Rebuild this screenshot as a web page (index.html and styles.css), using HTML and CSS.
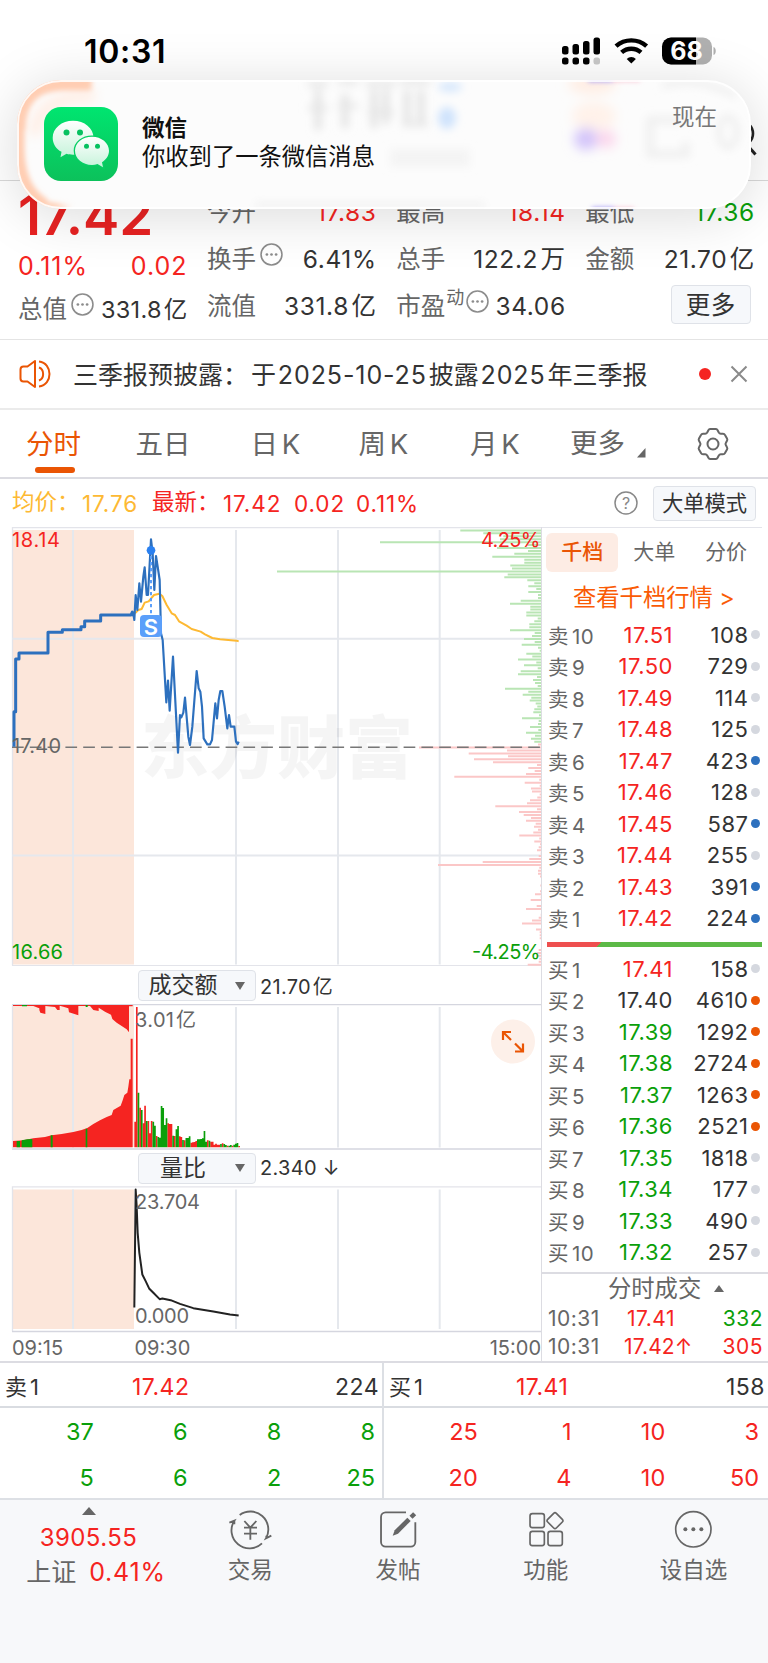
FILE: index.html
```html
<!DOCTYPE html>
<html lang="zh-CN">
<head>
<meta charset="utf-8">
<title>分时行情</title>
<link rel="stylesheet" href="styles.css">
</head>
<body>
<div class="page">
  <header class="status">
    <span class="clock">10:31</span>
    <svg class="status-icons" width="160" height="32" viewBox="0 0 160 32">
      <g fill="#000">
        <rect x="2" y="10" width="6.500" height="8.500" rx="2.500"/><rect x="12.500" y="8" width="6.500" height="10.500" rx="2.500"/><rect x="23" y="5" width="6.500" height="13.500" rx="2.500"/><rect x="33.500" y="1.500" width="6.500" height="17" rx="2.500"/>
        <rect x="2" y="21.500" width="6.500" height="7" rx="2.500"/><rect x="12.500" y="21.500" width="6.500" height="7" rx="2.500"/><rect x="23" y="21.500" width="6.500" height="7" rx="2.500"/>
      </g>
      <rect x="33.500" y="21.500" width="6.500" height="7" rx="2.500" fill="#c8c8c8"/>
      <g fill="none" stroke="#000" stroke-width="4.400">
        <path d="M56 10.200a23 23 0 0 1 30.600 0"/><path d="M61.600 16.400a14.500 14.500 0 0 1 19.400 0"/>
      </g>
      <path d="M71.300 27.500l-4.600-4.600a6.600 6.600 0 0 1 9.200 0z" fill="#000"/>
      <rect x="102" y="1.500" width="50" height="27" rx="9" fill="#b0b0b0"/>
      <path d="M111 1.500h25v27h-25a9 9 0 0 1-9-9v-9a9 9 0 0 1 9-9z" fill="#000"/>
      <path d="M153.500 11c3 1 3 7 0 8z" fill="#b0b0b0"/>
      <text x="126.500" y="23.800" class="battery-text">68</text>
    </svg>
  </header>
  <svg class="search-glyph" width="30" height="50" viewBox="0 0 30 50"><circle cx="6" cy="18.500" r="12" fill="none" stroke="#222" stroke-width="2.600"/><path d="M13 31l7.500 8.500" stroke="#222" stroke-width="3"/></svg>

  <section class="quote">
    <div class="col first">
      <div class="big">17.42</div>
      <div class="pair red change"><span>0.11%</span><span>0.02</span></div>
      <div class="pair cap"><span class="lab">总值</span><svg class="more-dot" viewBox="0 0 22 22"><use href="#dots"/></svg><span class="push tight">331.8 亿</span></div>
    </div>
    <div class="col">
      <div class="pair"><span class="lab">今开</span><span class="red">17.83</span></div>
      <div class="pair"><span class="lab">换手</span><svg class="more-dot" viewBox="0 0 22 22"><use href="#dots"/></svg><span class="push">6.41%</span></div>
      <div class="pair"><span class="lab">流值</span><span>331.8 亿</span></div>
    </div>
    <div class="col">
      <div class="pair"><span class="lab">最高</span><span class="red">18.14</span></div>
      <div class="pair"><span class="lab">总手</span><span>122.2 万</span></div>
      <div class="pair"><span class="lab">市盈</span><span class="sup">动</span><svg class="more-dot pe" viewBox="0 0 22 22"><use href="#dots"/></svg><span class="push">34.06</span></div>
    </div>
    <div class="col">
      <div class="pair"><span class="lab">最低</span><span class="green">17.36</span></div>
      <div class="pair"><span class="lab">金额</span><span>21.70 亿</span></div>
      <div class="pair end"><span class="more-btn">更多</span></div>
    </div>
  </section>

  <section class="notice">
    <svg width="36" height="32" viewBox="0 0 36 32" fill="none" stroke="#ea5504" stroke-width="2" stroke-linejoin="round"><path d="M17 3L9.500 8.500H5.500a3 3 0 0 0-3 3v9a3 3 0 0 0 3 3h4L17 29z"/><path d="M21 3.500c14 1.500 14 23.500 0 25M21 9.500c5.500 2 5.500 11 0 13"/></svg>
    <span class="notice-text">三季报预披露：<i></i>于 <b>2025-10-25</b> 披露 <b>2025</b> 年三季报</span>
    <span class="red-dot"></span>
    <svg class="close" width="18" height="18" viewBox="0 0 18 18"><path d="M1.500 1.500l15 15M16.500 1.500l-15 15" stroke="#8a8a8a" stroke-width="2"/></svg>
  </section>

  <nav class="tabs">
    <span class="tab on">分时</span><span class="tab">五日</span><span class="tab">日 K</span><span class="tab">周 K</span><span class="tab">月 K</span><span class="tab more">更多<svg width="9" height="10" viewBox="0 0 9 10"><path d="M8.500 0v9.500H0z" fill="#666"/></svg></span>
    <span class="tab gear"><svg width="34" height="34" viewBox="0 0 34 34" fill="none" stroke="#666" stroke-width="2" stroke-linejoin="round"><path d="M14 2h6q1 0 1.600 1.200l1.200 2.300q.7 1.200 2 1.200h2.200q1.400 0 2 1.200l2 3.600q.7 1.200 0 2.300L29.800 16q-.6 1 0 2l1.200 2.200q.7 1.100 0 2.300l-2 3.600q-.6 1.200-2 1.200h-2.200q-1.300 0-2 1.200l-1.200 2.300Q21 32 20 32h-6q-1 0-1.600-1.200l-1.200-2.300q-.7-1.200-2-1.200H7q-1.400 0-2-1.200l-2-3.600q-.7-1.200 0-2.300L4.200 18q.6-1 0-2L3 13.800q-.7-1.100 0-2.300l2-3.600q.6-1.200 2-1.200h2.200q1.300 0 2-1.200l1.200-2.300Q13 2 14 2z"/><circle cx="17" cy="17" r="5.500"/></svg></span>
  </nav>

  <section class="info">
    <span class="avg">均价：</span><span class="avg v1">17.76</span><span class="red l2">最新：</span><span class="red v2">17.42</span><span class="red v3">0.02</span><span class="red v4">0.11%</span>
    <svg class="help" width="26" height="26" viewBox="0 0 26 26"><circle cx="13" cy="13" r="11" fill="none" stroke="#888" stroke-width="1.500"/><text x="13" y="18.500" class="help-q">?</text></svg>
    <span class="mode-btn">大单模式</span>
  </section>

  <main class="board">
    <div class="charts">
      <svg width="542" height="439" viewBox="0 527 542 439">
        <rect x="12.500" y="530" width="121.500" height="434.500" fill="#fce6da"/>
        <path class="frame" d="M12.500 965.500V527.500H541M12 965.700H541"/>
        <path class="grid" d="M73 530v434.500M236 530v434.500M338 530v434.500M439.700 530v434.500M12 638.700h529M12 855.500h529"/>
        <text class="watermark" x="141" y="772.500" textLength="272">东方财富</text>
        <path id="sell-hist" stroke="#b9e5b4" stroke-width="2"/>
        <path id="buy-hist" stroke="#fbc7c7" stroke-width="2"/>
        <path d="M12 747.300H541" stroke="#777" stroke-width="1.600" stroke-dasharray="11.700 6.100"/>
        <g transform="translate(0 470) scale(.33333)" fill="none" stroke-linejoin="round">
          <path d="M405 430L415 420 425 417 434 398 446 394 462 375 478 371 487 378 500 405 515 430 525 435 537 454 560 467 575 477 602 485 615 493 637 504 660 508 710 512 716 514" stroke="#fdb933" stroke-width="6"/>
          <path d="M42 830V725H47V567H57V549H144V487H187V479H243V470H254V453H302V435H393L397 426 401 438" stroke="#2d70be" stroke-width="9"/>
          <path d="M400 430L403 450 407 375 412 420 418 340 423 395 430 320 434 292 440 375 444 375 453 208 458 250 463 360 468 258 473 290 479 330 483 490 488 510 499 697 504 632 509 722 519 560 534 848 540 735 544 742 550 728 555 683 565 800 570 825 577 770 590 603 596 655 601 665 606 710 611 805 622 823H630L636 810 646 700 651 745 656 690 661 663H667L674 710 682 775 687 735 692 770H703L708 815 713 822 716 815" stroke="#2d70be" stroke-width="6.500"/>
          <path d="M453 258V436" stroke="#5b9ffa" stroke-width="6" stroke-dasharray="10 8"/>
          <circle cx="453" cy="241" r="13" fill="#2a80f0"/>
          <rect x="420" y="435" width="66" height="66" rx="12" fill="#5b9ffa"/>
        </g>
        <text x="151" y="634.500" class="signal">S</text>
        <text x="12" y="547" class="t red-f" textLength="48">18.14</text>
        <text x="12" y="753" class="t grey-f" textLength="49">17.40</text>
        <text x="12" y="959" class="t green-f" textLength="51">16.66</text>
        <text x="481" y="547" class="t red-f" textLength="59.500">4.25%</text>
        <text x="472" y="959" class="t green-f" textLength="68.500">-4.25%</text>
      </svg>
      <div class="picker"><span class="select"><b>成交额</b><i></i></span><span class="val">21.70 亿</span></div>
      <svg width="542" height="146" viewBox="0 1004 542 146">
        <rect x="12.500" y="1005" width="121.500" height="142" fill="#fce6da"/>
        <path class="grid" d="M73 1007v140.500M236 1007v140.500M338 1007v140.500M439.700 1007v140.500"/>
        <path class="frame dark" d="M12 1004.700H541M12 1149H541"/><path class="frame" d="M12.500 1005v144"/>
        <g transform="translate(0 960) scale(.33333)">
          <path fill="#f52421" d="M39 562V543L70 541 100 535 135 531 155 526 185 522 220 516 245 510 262 504 280 492 300 481 320 471 335 465 340 450 362 437 368 421 373 405 382 398 385 380 388 358H392V236H398V562Z"/>
          <path fill="#f52421" d="M39 135V138H100L118 145V150L121 158 136 162V138L165 141 172 150H179V137L190 140 205 145 207 157 235 166V138H270L280 150 296 153V143L315 155 333 164 337 177 350 188 365 198 380 208 387 217V139H398V135Z"/>
          <path fill="#0a9f0a" d="M50 562V543H60V562ZM65 562V541L82 538 97 537V562ZM152 562V526H158V562ZM257 562V506H262V562ZM66 135h15v4H66zM257 135h6v6h-6z"/>
          <path id="vol-red" stroke="#f52421" stroke-width="5"/>
          <path id="vol-green" stroke="#0a9f0a" stroke-width="5"/>
        </g>
        <text x="135" y="1026.500" class="t grey-f" textLength="39">3.01</text><text x="176" y="1026.500" class="t grey-f">亿</text>
        <circle cx="513" cy="1041.500" r="22" fill="#fdf0e9"/>
        <path d="M503 1040v-8h8M503.500 1032.500l7.500 7.500M523 1043.500v8h-8M522.500 1051l-7.500-7.500" fill="none" stroke="#ea5504" stroke-width="2.200"/>
      </svg>
      <div class="picker two"><span class="select"><b>量比</b><i></i></span><span class="val">2.340 ↓</span></div>
      <svg width="542" height="147" viewBox="0 1186 542 147">
        <rect x="12.500" y="1189.500" width="121.500" height="139.500" fill="#fce6da"/>
        <path class="grid" d="M73 1189.500v139.500M236 1189.500v139.500M338 1189.500v139.500M439.700 1189.500v139.500"/>
        <path class="frame" d="M12.500 1331.500V1186.800H541"/><path class="frame dark" d="M12 1331.500H541"/>
        <path transform="translate(0 959.500) scale(.33333)" d="M403 1044L407 690 410 740 413 820 418 880 427 945 437 965 448 988 460 1000 479 1019 487 1017 512 1022 540 1033 580 1046 640 1056 690 1065 716 1068" fill="none" stroke="#222" stroke-width="6" stroke-linejoin="round"/>
        <text x="135" y="1209" class="t grey-f" textLength="65">23.704</text>
        <text x="135" y="1323" class="t grey-f" textLength="54">0.000</text>
      </svg>
      <div class="axis"><span>09:15</span><span>09:30</span><span>15:00</span></div>
    </div>

    <aside class="depth">
      <div class="modes"><span class="on">千档</span><span>大单</span><span>分价</span></div>
      <div class="link">查看千档行情 <b>&gt;</b></div>
      <div class="ladder">
        <div class="row"><span>卖<i></i>10</span><b class="red">17.51</b><em>108</em><u></u></div>
        <div class="row"><span>卖<i></i>9</span><b class="red">17.50</b><em>729</em><u></u></div>
        <div class="row"><span>卖<i></i>8</span><b class="red">17.49</b><em>114</em><u></u></div>
        <div class="row"><span>卖<i></i>7</span><b class="red">17.48</b><em>125</em><u></u></div>
        <div class="row"><span>卖<i></i>6</span><b class="red">17.47</b><em>423</em><u class="blue"></u></div>
        <div class="row"><span>卖<i></i>5</span><b class="red">17.46</b><em>128</em><u></u></div>
        <div class="row"><span>卖<i></i>4</span><b class="red">17.45</b><em>587</em><u class="blue"></u></div>
        <div class="row"><span>卖<i></i>3</span><b class="red">17.44</b><em>255</em><u></u></div>
        <div class="row"><span>卖<i></i>2</span><b class="red">17.43</b><em>391</em><u class="blue"></u></div>
        <div class="row"><span>卖<i></i>1</span><b class="red">17.42</b><em>224</em><u class="blue"></u></div>
      </div>
      <div class="ratio"></div>
      <div class="ladder">
        <div class="row"><span>买<i></i>1</span><b class="red">17.41</b><em>158</em><u></u></div>
        <div class="row"><span>买<i></i>2</span><b>17.40</b><em>4610</em><u class="orange"></u></div>
        <div class="row"><span>买<i></i>3</span><b class="green">17.39</b><em>1292</em><u class="orange"></u></div>
        <div class="row"><span>买<i></i>4</span><b class="green">17.38</b><em>2724</em><u class="orange"></u></div>
        <div class="row"><span>买<i></i>5</span><b class="green">17.37</b><em>1263</em><u class="orange"></u></div>
        <div class="row"><span>买<i></i>6</span><b class="green">17.36</b><em>2521</em><u class="orange"></u></div>
        <div class="row"><span>买<i></i>7</span><b class="green">17.35</b><em>1818</em><u></u></div>
        <div class="row"><span>买<i></i>8</span><b class="green">17.34</b><em>177</em><u></u></div>
        <div class="row"><span>买<i></i>9</span><b class="green">17.33</b><em>490</em><u></u></div>
        <div class="row"><span>买<i></i>10</span><b class="green">17.32</b><em>257</em><u></u></div>
      </div>
      <div class="deals">
        <div class="deals-title">分时成交<svg width="10" height="7" viewBox="0 0 10 7"><path d="M5 0l5 7H0z" fill="#666"/></svg></div>
        <div class="deal"><span>10:31</span><b class="red">17.41</b><em class="green">332</em></div>
        <div class="deal"><span>10:31</span><b class="red up">17.42↑</b><em class="red">305</em></div>
      </div>
    </aside>
  </main>

  <section class="queue">
    <div class="side">
      <div class="best"><span>卖<i></i>1</span><b>17.42</b><em>224</em></div>
      <div class="cells green"><span>37</span><span>6</span><span>8</span><span>8</span><span>5</span><span>6</span><span>2</span><span>25</span></div>
    </div>
    <div class="side right">
      <div class="best"><span>买<i></i>1</span><b>17.41</b><em>158</em></div>
      <div class="cells red"><span>25</span><span>1</span><span>10</span><span>3</span><span>20</span><span>4</span><span>10</span><span>50</span></div>
    </div>
  </section>

  <footer class="bottom">
    <div class="index">
      <svg width="14" height="8" viewBox="0 0 14 8"><path d="M7 0l7 8H0z" fill="#666"/></svg>
      <div class="idx-val red">3905.55</div>
      <div class="idx-sub"><span>上证</span><span class="red pct">0.41%</span></div>
    </div>
    <div class="item">
      <svg viewBox="83 55 140 130" fill="none" stroke="#666" stroke-width="5.500"><path d="M121 76A54 54 0 0 1 200 146L216 138M201 147V138M188 161A54 54 0 0 1 105 93L90 99M105 93V104"/><path d="M135 94L153 114 171 94M153 114V150M134 114H173M134 132H173"/></svg>
      <span>交易</span>
    </div>
    <div class="item">
      <svg viewBox="527 55 140 130" fill="none" stroke="#666" stroke-width="5.500"><path d="M620 68H559a14 14 0 0 0-14 14V157a14 14 0 0 0 14 14H634a14 14 0 0 0 14-14V98"/><path d="M580 138L586 122 624 84 634 94 596 132Z" fill="#666" stroke="none"/><path d="M635 83L646 72" stroke-width="13"/></svg>
      <span>发帖</span>
    </div>
    <div class="item">
      <svg viewBox="40 55 140 130" fill="none" stroke="#666" stroke-width="5" stroke-linejoin="round"><rect x="61" y="72" width="43" height="42" rx="7"/><rect x="61" y="125" width="43" height="43" rx="7"/><rect x="115" y="125" width="43" height="43" rx="7"/><path d="M132 71Q136 67 140 71L158 89Q162 93 158 97L140 115Q136 119 132 115L114 97Q110 93 114 89Z"/></svg>
      <span>功能</span>
    </div>
    <div class="item">
      <svg viewBox="482 55 140 130" fill="none" stroke="#666" stroke-width="5"><circle cx="552" cy="119" r="53"/><g fill="#666" stroke="none"><circle cx="528" cy="119" r="6"/><circle cx="552" cy="119" r="6"/><circle cx="576" cy="119" r="6"/></g></svg>
      <span>设自选</span>
    </div>
  </footer>

  <div class="toast">
    <div class="toast-bg">
      <svg class="glow" width="735" height="129" viewBox="17 80 735 129">
        <defs>
          <filter id="b3" filterUnits="userSpaceOnUse" x="0" y="50" width="768" height="190"><feGaussianBlur stdDeviation="2.500"/></filter>
          <filter id="b5" filterUnits="userSpaceOnUse" x="0" y="50" width="768" height="190"><feGaussianBlur stdDeviation="4"/></filter>
          <filter id="b7" filterUnits="userSpaceOnUse" x="0" y="50" width="768" height="190"><feGaussianBlur stdDeviation="6"/></filter>
          <linearGradient id="fade" gradientUnits="userSpaceOnUse" x1="17" y1="90" x2="98" y2="112"><stop offset="0" stop-color="#ffcdb2"/><stop offset=".8" stop-color="#ffcdb2"/><stop offset="1" stop-color="#ffcdb2" stop-opacity="0"/></linearGradient>
        </defs>
        <g filter="url(#b7)"><path d="M95 96Q40 94 34 135" fill="none" stroke="#ffeee5" stroke-width="12"/></g>
        <g filter="url(#b3)" fill="none" stroke="url(#fade)"><path d="M92 84H62Q19 86 19 130" stroke-width="13"/><path d="M19 120V150Q20 190 45 204" stroke-width="11"/><path d="M40 202Q52 208 92 208" stroke-width="6"/></g>
        <g filter="url(#b5)" stroke="#dfdfdf" stroke-width="6" fill="none"><path d="M318 90v40M345 94v34M374 90v38M386 90v34M407 90v36M421 90v36"/><path d="M308 84h20M338 82h20M366 84h30M400 82h30" stroke="#e6e6e6"/><path d="M308 108h20M338 106h20M368 112h26M402 124h26" stroke="#e6e6e6" stroke-width="5"/><path d="M390 158h80" stroke="#f4f4f4" stroke-width="18"/><path d="M255 205h230" stroke="#efefef" stroke-width="5"/></g>
        <g filter="url(#b7)"><ellipse cx="592" cy="84" rx="24" ry="10" fill="#ffeee4"/><ellipse cx="594" cy="116" rx="22" ry="14" fill="#fff2ea"/><ellipse cx="586" cy="139" rx="12" ry="11" fill="#d3c4fa"/><ellipse cx="606" cy="139" rx="10" ry="9" fill="#fbd6ec"/></g>
        <g filter="url(#b5)"><ellipse cx="447" cy="118" rx="9" ry="11" fill="#cfe3fc"/><ellipse cx="450" cy="87" rx="12" ry="5" fill="#d6e7fc"/>
        <path d="M684 120h-34v34h36v-12" fill="none" stroke="#f0f0f0" stroke-width="8"/><ellipse cx="728" cy="132" rx="9" ry="15" fill="none" stroke="#ececec" stroke-width="5"/><path d="M662 86Q700 76 735 96" fill="none" stroke="#ececec" stroke-width="5"/></g>
        <g filter="url(#b3)"><path d="M588 79h26" stroke="#9f97f6" stroke-width="5"/><path d="M612 79h28" stroke="#f8b4c8" stroke-width="4"/><path d="M592 210h22" stroke="#9b8df5" stroke-width="5"/><path d="M614 210h20" stroke="#f8b4c8" stroke-width="4"/></g>
      </svg>
    </div>
    <svg class="app-icon" width="74" height="74" viewBox="44 107 74 74">
      <defs><linearGradient id="g" x2="0" y2="1"><stop offset="0" stop-color="#00e570"/><stop offset="1" stop-color="#0cc15b"/></linearGradient><linearGradient id="w" x2="0" y2="1"><stop offset="0" stop-color="#fff"/><stop offset="1" stop-color="#c6f3da"/></linearGradient></defs>
      <rect x="44" y="107" width="74" height="74" rx="17" fill="url(#g)"/>
      <path d="M73 120.700c11.500 0 20.500 7.500 20.500 17s-9 17-20.500 17c-2.500 0-4.500-.3-6.500-.9l-6 3.500 1-5.500c-5.500-3-8.800-8-8.800-14.100 0-9.500 9-17 20.300-17z" fill="url(#w)"/>
      <path d="M92 136.700c9.500 0 17 6.300 17 14 0 5-3 9-7 11.500l1 5-5.500-3.200c-1.800.6-3.500.9-5.500.9-9.500 0-17-6.300-17-14.200s7.500-14 17-14z" fill="url(#w)" stroke="#07cf64" stroke-width="2.600" paint-order="stroke"/>
      <g fill="#07c160"><circle cx="66.500" cy="132.500" r="3"/><circle cx="80" cy="132.500" r="3"/><circle cx="86.500" cy="146.300" r="2.500"/><circle cx="97.500" cy="146.300" r="2.500"/></g>
    </svg>
    <div class="toast-body"><strong>微信</strong><span>你收到了一条微信消息</span></div>
    <span class="toast-time">现在</span>
  </div>
</div>
<svg width="0" height="0" class="defs"><symbol id="dots" viewBox="0 0 22 22"><circle cx="11" cy="11" r="10" fill="none" stroke="#8c8c8c" stroke-width="1.500"/><g fill="#8c8c8c"><circle cx="6.600" cy="11" r="1.300"/><circle cx="11" cy="11" r="1.300"/><circle cx="15.400" cy="11" r="1.300"/></g></symbol></svg>
<script src="charts.js"></script>
</body>
</html>
```
FILE: styles.css
```css
* { box-sizing: border-box; }
body { margin: 0; background: #fff; font-family: Inter, "Noto Sans CJK SC", sans-serif; color: #333; }
i, em, u { font-style: normal; text-decoration: none; }
b { font-weight: 400; }
svg { display: block; flex: none; }
.defs { position: absolute; }
.page { position: relative; width: 768px; height: 1663px; overflow: hidden; white-space: nowrap; display: flex; flex-direction: column; }
.page > * { flex: none; }
.red { color: #f52421; }
.green { color: #0a9f0a; }

.status { height: 181px; border-bottom: 1px solid #d9d9d9; padding: 36px 48px 0 84px; display: flex; justify-content: space-between; align-items: flex-start; }
.clock { font-size: 32px; font-weight: 600; line-height: 31px; color: #000; letter-spacing: .7px; }
.battery-text { font-size: 25px; font-weight: 700; fill: #fff; text-anchor: middle; }
.search-glyph { position: absolute; left: 735px; top: 115px; }

.quote { height: 159px; border-bottom: 1px solid #e4e4e4; padding: 8px 12px 0 18px; display: grid; grid-template-columns: repeat(4, 169.500px); gap: 19.600px; font-size: 24.500px; letter-spacing: .6px; word-spacing: -5px; }
.col { display: flex; flex-direction: column; }
.pair { height: 47px; line-height: 47px; display: flex; justify-content: space-between; align-items: center; }
.lab { color: #666; letter-spacing: 0; font-size: 24.500px; }
.push { margin-left: auto; }
.more-dot { width: 23px; height: 23px; margin: -11px 0 0 4px; }
.first .big { height: 54px; line-height: 52px; font-size: 54.500px; font-weight: 600; color: #e82222; letter-spacing: 0; }
.first .change { height: 47px; letter-spacing: 1px; font-size: 25px; }
.first .cap { height: 40px; line-height: 38px; }
.first .cap .lab { line-height: 36px; margin-top: -3px; }
.first .tight { font-size: 23.500px; letter-spacing: .3px; }
.sup { font-size: 18px; line-height: 24px; margin: -17px 0 0 1px; color: #666; letter-spacing: 0; }
.more-dot.pe { margin-left: 2px; }
.end { justify-content: flex-end; }
.more-btn { width: 80px; height: 39px; margin: -4px 4px 0 0; line-height: 38px; text-align: center; border: 1px solid #dfe2e8; border-radius: 4px; background: #f6f8fb; }

.notice { height: 70px; border-bottom: 2px solid #ebebeb; display: flex; align-items: center; padding: 0 20px 0 18px; }
.notice-text { width: 600px; margin: -3px 0 0 19px; font-size: 25px; word-spacing: -5.200px; }
.notice-text b { letter-spacing: .9px; }
.notice-text i { display: inline-block; width: 3px; }
.red-dot { width: 12px; height: 12px; border-radius: 50%; background: #f52421; margin-left: 26px; }
.close { margin-left: auto; }

.tabs { height: 69px; border-bottom: 2px solid #dcdce2; display: flex; align-items: center; font-size: 27.500px; color: #666; padding-left: 26px; word-spacing: -4px; }
.tab { height: 67px; line-height: 69px; width: 109.500px; position: relative; }
.tab.on { color: #ea5504; }
.tab.on::after { content: ""; position: absolute; left: 9px; top: 57px; width: 40px; height: 6px; border-radius: 3px; background: #ea5504; }
.tab:nth-child(2) { width: 115px; }
.tab:nth-child(3) { width: 108px; }
.tab:nth-child(4) { width: 111.500px; }
.tab:nth-child(5) { width: 100px; }
.tab.more { display: flex; align-items: center; width: 126px; }
.tab.more svg { margin: 18px 0 0 12px; }
.tab.gear { width: 34px; display: flex; align-items: center; }

.info { height: 48px; display: flex; align-items: center; padding-left: 12px; font-size: 22.500px; letter-spacing: .9px; }
.info .avg { color: #fdb933; width: 70px; }
.info .v1 { width: 70px; }
.l2 { width: 71px; }
.v2 { width: 71px; }
.v3 { width: 62px; }
.v4 { width: 257px; }
.info .avg:first-child, .l2 { letter-spacing: 0; line-height: 26px; margin-top: -2px; }
.help-q { font-size: 16px; fill: #888; text-anchor: middle; letter-spacing: 0; }
.mode-btn { width: 103px; height: 35px; line-height: 33px; margin-left: 14px; text-align: center; font-size: 21.300px; border: 1px solid #dfe2e8; border-radius: 4px; background: #f6f8fb; letter-spacing: 0; }

.board { height: 836px; display: flex; border-bottom: 2px solid #dcdce2; }
.charts { width: 541px; display: flex; flex-direction: column; }
.frame { fill: none; stroke: #e3e4ea; stroke-width: 1.300; }
.frame.dark { stroke: #d5d6df; }
.grid { fill: none; stroke: #e5e8ed; stroke-width: 2; }
.t { font-size: 20px; }
.red-f { fill: #f52421; }
.green-f { fill: #0a9f0a; }
.grey-f { fill: #666; }
.signal { font-size: 22px; font-weight: 600; fill: #fff; text-anchor: middle; }
.watermark { font-size: 68px; font-weight: 900; fill: #000; opacity: .035; }
.picker { height: 38px; padding: 2px 0 0 138px; display: flex; align-items: center; word-spacing: -4px; }
.picker.two { height: 37px; padding-top: 1px; word-spacing: 0; }
.select { width: 118px; height: 31px; border: 1px solid #dfe2e8; border-radius: 4px; background: #f6f8fb; display: flex; align-items: center; }
.select b { width: 88px; text-align: center; font-size: 23px; line-height: 29px; }
.select i { margin-left: 8px; border: 5px solid transparent; border-top: 8px solid #666; border-bottom: 0; }
.val { margin-left: 4px; font-size: 20px; letter-spacing: .3px; }
.axis { height: 28px; display: grid; grid-template-columns: 122.500px 1fr auto; align-items: center; padding: 1px 0 0 12px; font-size: 20px; color: #666; }

.depth { width: 227px; border-left: 1px solid #dcdce2; display: flex; flex-direction: column; }
.modes { height: 45px; margin: 0 6px 0 0; padding: 5px 0 0 4px; border-top: 1px solid #e3e4ea; display: flex; font-size: 21px; color: #666; line-height: 38px; text-align: center; }
.modes span { width: 72.500px; height: 39px; }
.modes .on { width: 73px; border-radius: 6px; background: #fdece4; color: #ea5504; font-weight: 500; }
.link { height: 46.500px; line-height: 51px; padding-left: 31px; font-size: 23.300px; color: #fa5b05; }
.modes, .link, .ladder, .ratio, .deals { flex: none; }
.row { height: 31.500px; display: grid; grid-template-columns: 68px 57px 75.500px 2.500px 9px; align-items: center; padding: 1px 0 0 6px; font-size: 22px; letter-spacing: .5px; }
.row span { color: #666; font-size: 20.500px; }
.row i { display: inline-block; width: 3px; }
.row b, .row em { text-align: right; }
.row u { grid-column: 5; width: 9px; height: 9px; border-radius: 50%; background: #d5d8df; }
.row u.blue { background: #2d70be; }
.row u.orange { background: #ea5504; }
.ratio { height: 5px; margin: 8px 6px 6px 5px; background: linear-gradient(135deg, #ee4f4f 0 25%, #5cb947 25%); }
.deals { margin-top: 4px; border-top: 2px solid #dcdce2; }
.deals-title { height: 30px; padding-left: 66px; line-height: 30px; display: flex; align-items: center; font-size: 23.300px; color: #666; }
.deals-title svg { margin-left: 13px; }
.deal { height: 28.500px; display: grid; grid-template-columns: 79px 60px 1fr; align-items: center; padding: 1px 5px 0 6px; font-size: 21px; color: #666; letter-spacing: .5px; }
.deal em { text-align: right; }
.deal .up { margin-left: -3px; letter-spacing: .1px; }

.queue { height: 137px; display: grid; grid-template-columns: 384px 384px; border-bottom: 2px solid #dde0e5; }
.side { border-right: 2px solid #dcdfe4; padding-right: 4px; }
.side.right { border-right: 0; }
.best { height: 45px; line-height: 30px; border-bottom: 2px solid #d9dce1; display: grid; grid-template-columns: 127px 1fr auto; align-items: center; padding: 4px 3px 0 5px; margin-right: -4px; font-size: 23px; letter-spacing: .5px; }
.best span { font-size: 22px; letter-spacing: 0; }
.best i { display: inline-block; width: 3px; }
.best b { color: #f52421; }
.cells { display: grid; grid-template-columns: repeat(4, 93.750px); grid-auto-rows: 45.500px; align-items: center; text-align: right; font-size: 23.500px; padding-top: 1px; }

.bottom { height: 163px; background: #f7f8fa; display: grid; grid-template-columns: 177px repeat(4, 147.750px); color: #666; font-size: 22.500px; }
.index { display: flex; flex-direction: column; align-items: center; padding-top: 7px; font-size: 24px; }
.idx-val { height: 39px; line-height: 45px; letter-spacing: .4px; }
.idx-sub { height: 34px; line-height: 36px; padding-left: 15px; display: flex; gap: 13px; font-size: 25px; }
.pct { font-size: 25px; letter-spacing: .8px; }
.item { display: flex; flex-direction: column; align-items: center; padding: 8px 1px 0 0; }
.item svg { width: 46.700px; height: 43.300px; }
.item span { line-height: 38px; }

.toast { position: absolute; left: 17px; top: 80px; width: 734px; height: 129px; border-radius: 44px; background: #fcfcfc; box-shadow: 0 6px 55px rgba(0,0,0,.15); display: flex; align-items: flex-start; padding: 27px 34px 0 27px; }
.toast-bg { position: absolute; inset: 0; border-radius: 44px; overflow: hidden; }
.toast-bg::after { content: ""; position: absolute; inset: 0; border: 2px solid rgba(255,255,255,.85); border-radius: 44px; }
.glow { position: absolute; left: 0; top: 0; }
.app-icon, .toast-body, .toast-time { position: relative; }
.toast-body { display: flex; flex-direction: column; margin: 7px 0 0 24px; font-size: 23.300px; line-height: 29px; color: #111; }
.toast-body strong { font-size: 22.500px; font-weight: 600; line-height: 28px; }
.toast-time { margin: -5px 0 0 auto; font-size: 22.500px; line-height: 30px; color: #777; }
```
FILE: charts.js
```js
// Left edge of every price-level bar; bars run to the right border of the plot.
var levels = [571,640,700,690,330,770,681,774,733,667,763,763,721,726,21,713,703,772,793,775,799,775,804,804,752,720,781,781,769,769,803,793,778,778,720,794,786,762,794,755,804,809,769,787,744,799,762,803,752,744,801,789,795,803,705,775,758,784,779,797,802,793,790,807,756,806,804,780,805,768,795,783,793,
804,447,711,596,714,612,669,801,775,794,768,553,808,764,809,783,786,809,802,780,771,676,801,747,761,783,768,797,792,804,790,748,808,793,810,806,801,812,806,778,638,504,808,804,804,810,813,815,811,813,810,795,812,782,813,800,768,814,812,806,786,756,813,798,809,809,809,813,813,813,806,800,803,808,806,773];
var sell = '', buy = '';
levels.forEach(function (x, i) {
  var seg = 'M' + (270 + x / 3).toFixed(1) + ' ' + (530.4 + i * 2.934).toFixed(2) + 'H541.5';
  if (i < 73) sell += seg; else buy += seg;
});
document.getElementById('sell-hist').setAttribute('d', sell);
document.getElementById('buy-hist').setAttribute('d', buy);

// Minute turnover since 09:30: colour and bar top.
var minutes = 'r485 r141 g398 r443 g450 r490 r437 g483 r483 r520 r483 g485 g497 r528 g531 g533 g438 g444 g495 g475 r490 r492 r492 g527 r528 g508 g498 r529 r531 g540 r541 g534 g534 g529 r548 r547 r546 r543 g538 g538 g537 g535 g513 g545 r541 g542 r545 r545 r554 r551 r554 r554 g552 r550 g552 g555 r557 g557 g555 r557 g554 g551 g549 r558'.split(' ');
var red = '', green = '';
minutes.forEach(function (m, i) {
  var seg = 'M' + (405.5 + i * 4.95).toFixed(1) + ' 562V' + m.slice(1);
  if (m[0] === 'r') red += seg; else green += seg;
});
document.getElementById('vol-red').setAttribute('d', red);
document.getElementById('vol-green').setAttribute('d', green);
```
